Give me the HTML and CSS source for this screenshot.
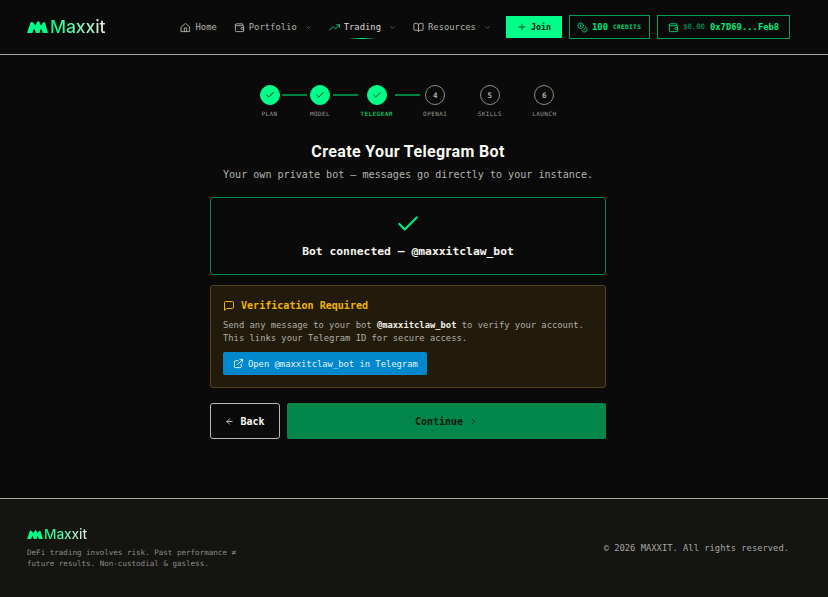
FILE: index.html
```html
<!DOCTYPE html>
<html lang="en">
<head>
<meta charset="utf-8">
<title>Maxxit</title>
<link rel="stylesheet" href="styles.css">
</head>
<body>
<header class="header">
  <a class="logo">
    <svg class="logo-mark" viewBox="0 0 21 12"><path d="M0 12 L3.2 2.4 Q4.4 -.2 6 1.4 L8 3.8 Q8.6 4.4 9 3.6 L9.8 1.6 Q11 -.8 12.4 1 L13.4 3.4 Q14 4.4 14.6 3.8 L15.6 2 Q17 -.2 18.2 2.4 L21 12 H15.6 L14.6 8.6 Q14 7.4 13.4 8.6 L12.6 12 H8.8 L7.8 8.8 Q7.2 7.4 6.6 8.6 L5.4 12 Z" fill="#00ff88"/></svg>
    <span class="logo-text">Maxxit</span>
  </a>
  <nav class="nav">
    <a class="nav-item"><svg class="ico" viewBox="0 0 24 24"><path d="M3 10.5 12 3l9 7.5V21H3Z"/><path d="M9.5 21v-8h5v8"/></svg>Home</a>
    <a class="nav-item"><svg class="ico" viewBox="0 0 24 24"><path d="M19 7V4H5a2 2 0 0 0 0 4h15a1 1 0 0 1 1 1v11a1 1 0 0 1-1 1H5a2 2 0 0 1-2-2V6"/><path d="M21 12h-4a2 2 0 0 0 0 4h4"/></svg>Portfolio<svg class="chev" viewBox="0 0 24 24"><path d="m6 9 6 6 6-6"/></svg></a>
    <a class="nav-item active"><svg class="ico ico-green" viewBox="0 0 24 24"><path d="m1 18 8-8 5 5 9-9"/><path d="M17 6h6v6"/></svg>Trading<svg class="chev" viewBox="0 0 24 24"><path d="m6 9 6 6 6-6"/></svg><span class="underline"></span></a>
    <a class="nav-item"><svg class="ico" viewBox="0 0 24 24"><path d="M12 7v14"/><path d="M3 18a1 1 0 0 1-1-1V4a1 1 0 0 1 1-1h5a4 4 0 0 1 4 4 4 4 0 0 1 4-4h5a1 1 0 0 1 1 1v13a1 1 0 0 1-1 1h-6a3 3 0 0 0-3 3 3 3 0 0 0-3-3Z"/></svg>Resources<svg class="chev" viewBox="0 0 24 24"><path d="m6 9 6 6 6-6"/></svg></a>
  </nav>
  <div class="actions">
    <a class="join"><svg class="ico ico-dark" viewBox="0 0 24 24"><path d="M5 12h14M12 5v14"/></svg>Join</a>
    <a class="pill credits"><svg class="ico ico-green" viewBox="0 0 24 24"><circle cx="8" cy="8" r="6"/><path d="M18.09 10.37A6 6 0 1 1 10.34 18"/><path d="M7 6h1v4"/><path d="m16.71 13.88.7.71-2.82 2.82"/></svg><b>100</b><span class="small">CREDITS</span></a>
    <a class="pill wallet"><svg class="ico ico-green" viewBox="0 0 24 24"><path d="M19 7V4H5a2 2 0 0 0 0 4h15a1 1 0 0 1 1 1v11a1 1 0 0 1-1 1H5a2 2 0 0 1-2-2V6"/><path d="M21 12h-4a2 2 0 0 0 0 4h4"/></svg><span class="bal">$0.00</span><b>0x7D69...Feb8</b></a>
  </div>
</header>

<main class="main">
  <ol class="stepper">
    <li class="step done"><span class="dot"><svg viewBox="0 0 24 24"><path d="M20 6 9 17l-5-5"/></svg></span><span class="lbl">PLAN</span></li>
    <li class="link on"></li>
    <li class="step done"><span class="dot"><svg viewBox="0 0 24 24"><path d="M20 6 9 17l-5-5"/></svg></span><span class="lbl">MODEL</span></li>
    <li class="link on"></li>
    <li class="step done current"><span class="dot"><svg viewBox="0 0 24 24"><path d="M20 6 9 17l-5-5"/></svg></span><span class="lbl">TELEGRAM</span></li>
    <li class="link on"></li>
    <li class="step"><span class="dot">4</span><span class="lbl">OPENAI</span></li>
    <li class="link"></li>
    <li class="step"><span class="dot">5</span><span class="lbl">SKILLS</span></li>
    <li class="link"></li>
    <li class="step"><span class="dot">6</span><span class="lbl">LAUNCH</span></li>
  </ol>

  <h1 class="title">Create Your Telegram Bot</h1>
  <p class="sub">Your own private bot — messages go directly to your instance.</p>

  <section class="card ok">
    <svg class="big-check" viewBox="0 0 24 24"><path d="M20 6 9 17l-5-5"/></svg>
    <p class="ok-text">Bot connected — @maxxitclaw_bot</p>
  </section>

  <section class="card warn">
    <h2 class="warn-title"><svg class="ico-warn" viewBox="0 0 24 24"><path d="M21 15a2 2 0 0 1-2 2H7l-4 4V5a2 2 0 0 1 2-2h14a2 2 0 0 1 2 2Z"/></svg>Verification Required</h2>
    <p class="warn-text">Send any message to your bot <b>@maxxitclaw_bot</b> to verify your account. This links your Telegram ID for secure access.</p>
    <a class="tg-btn"><svg class="ico ico-white" viewBox="0 0 24 24"><path d="M15 3h6v6"/><path d="M10 14 21 3"/><path d="M18 13v6a2 2 0 0 1-2 2H5a2 2 0 0 1-2-2V8a2 2 0 0 1 2-2h6"/></svg>Open @maxxitclaw_bot in Telegram</a>
  </section>

  <div class="buttons">
    <a class="back"><svg class="ico ico-white" viewBox="0 0 24 24"><path d="m12 19-7-7 7-7"/><path d="M19 12H5"/></svg>Back</a>
    <a class="continue">Continue<svg class="ico ico-dark" viewBox="0 0 24 24"><path d="m9 18 6-6-6-6"/></svg></a>
  </div>
</main>

<footer class="footer">
  <div class="foot-left">
    <a class="logo foot-logo">
      <svg class="logo-mark" viewBox="0 0 21 12"><path d="M0 12 L3.2 2.4 Q4.4 -.2 6 1.4 L8 3.8 Q8.6 4.4 9 3.6 L9.8 1.6 Q11 -.8 12.4 1 L13.4 3.4 Q14 4.4 14.6 3.8 L15.6 2 Q17 -.2 18.2 2.4 L21 12 H15.6 L14.6 8.6 Q14 7.4 13.4 8.6 L12.6 12 H8.8 L7.8 8.8 Q7.2 7.4 6.6 8.6 L5.4 12 Z" fill="#00ff88"/></svg>
      <span class="logo-text">Maxxit</span>
    </a>
    <p class="disclaimer">DeFi trading involves risk. Past performance ≠ future results. Non-custodial &amp; gasless.</p>
  </div>
  <p class="copy">© 2026 MAXXIT. All rights reserved.</p>
</footer>
</body>
</html>
```

FILE: styles.css
```css
* { box-sizing: border-box; margin: 0; padding: 0; }
html, body { height: 100%; }
body {
  background: #0a0a0a;
  color: #e8e8e0;
  font-family: "DejaVu Sans Mono", "Liberation Mono", monospace;
  overflow: hidden;
}
svg { display: block; flex: none; fill: none; stroke-linecap: round; stroke-linejoin: round; }

.header {
  height: 55px;
  border-bottom: 1px solid #a8a8a0;
  display: flex;
  align-items: center;
  padding: 0 38px 0 27px;
}
.logo { display: flex; align-items: center; gap: 2px; }
.logo-mark { width: 21px; height: 12px; }
.logo-text {
  font-family: Inter, "Liberation Sans", sans-serif;
  font-size: 17.6px;
  font-weight: 500;
  line-height: 20px;
  letter-spacing: -.1px;
  background: linear-gradient(90deg, #00ff88, #e8e8e0);
  -webkit-background-clip: text;
  background-clip: text;
  color: transparent;
}
.nav { display: flex; align-items: center; margin-left: 75px; gap: 17px; }
.nav-item {
  position: relative;
  display: flex;
  align-items: center;
  font-size: 8.85px;
  line-height: 12px;
  color: #b4b4ac;
}
.nav-item.active { color: #dcdcd4; }
.ico { width: 11px; height: 11px; stroke: #b4b4ac; stroke-width: 2; margin-right: 4px; }
.ico-green { stroke: #00d873; }
.ico-dark { stroke: #062414; }
.ico-white { stroke: #f2f2ea; }
.chev { width: 7px; height: 7px; stroke: #8a8a84; stroke-width: 2; margin-left: 8px; }
.underline {
  position: absolute;
  left: 19px;
  bottom: -6px;
  width: 28px;
  height: 1px;
  background: linear-gradient(90deg, transparent, #00ff88, transparent);
}
.actions { display: flex; align-items: center; margin-left: auto; gap: 7px; }
.join {
  height: 22px;
  width: 56px;
  background: #00ff88;
  color: #08130c;
  font-size: 8.4px;
  font-weight: 700;
  display: flex;
  align-items: center;
  justify-content: center;
}
.join .ico { width: 10px; height: 10px; }
.pill {
  height: 24px;
  border: 1px solid #04a15a;
  display: flex;
  align-items: center;
  color: #00e87a;
  font-size: 8.85px;
  line-height: 12px;
  padding: 0 7px;
}
.credits { width: 81px; }
.wallet { width: 133px; padding-left: 10px; }
.wallet .ico { margin-right: 4px; }
.pill .small { font-size: 6.2px; letter-spacing: .3px; font-weight: 700; margin-left: 5px; color: #00d873; }
.pill .bal { font-size: 7.3px; margin-right: 5px; color: #05a45c; }
.credits .ico { margin-right: 4px; }

.main { width: 816px; display: flex; flex-direction: column; align-items: center; padding-top: 30px; }
.stepper { list-style: none; display: flex; align-items: flex-start; height: 50px; }
.step { display: flex; flex-direction: column; align-items: center; min-width: 20px; }
.dot {
  width: 20px;
  height: 20px;
  border-radius: 50%;
  border: 1px solid #8c8c86;
  display: flex;
  align-items: center;
  justify-content: center;
  font-size: 7.5px;
  font-weight: 700;
  color: #b4b4ac;
}
.done .dot { background: #00ff88; border-color: #00ff88; }
.dot svg { width: 10px; height: 10px; stroke: #08130c; stroke-width: 2; }
.lbl { font-size: 6px; line-height: 8px; letter-spacing: .42px; margin-top: 5px; color: #999992; }
.current .lbl { color: #02b862; font-weight: 700; }
.link { width: 25px; height: 2px; margin: 9px 2.7px 0; }
.link.on { background: #04803f; }

.title {
  font-family: Roboto, Inter, sans-serif;
  font-size: 16px;
  font-weight: 700;
  line-height: 20px;
  letter-spacing: .36px;
  color: #fafaf4;
  margin-top: 7px;
}
.sub { font-size: 10.08px; line-height: 14px; color: #b4b4ac; margin-top: 6px; }

.card { width: 396px; border-radius: 3px; border: 1px solid #06894a; }
.ok { height: 78px; margin-top: 15px; display: flex; flex-direction: column; align-items: center; padding-top: 13px; }
.big-check { width: 26px; height: 26px; stroke: #00f080; stroke-width: 2; }
.ok-text { font-size: 11.35px; font-weight: 700; line-height: 14px; color: #f6f6ee; margin-top: 7px; }
.warn { background: #221a0b; border-color: #57431a; margin-top: 10px; height: 103px; padding: 13px 12px 0; }
.warn-title { display: flex; align-items: center; gap: 6px; font-size: 10.05px; font-weight: 700; line-height: 14px; color: #f0b400; }
.ico-warn { width: 12px; height: 12px; stroke: #f0b400; stroke-width: 2; }
.warn-text { font-size: 8.82px; line-height: 13px; color: #b0b0a8; margin-top: 6px; }
.warn-text b { color: #f0f0e8; }
.tg-btn {
  width: 204px;
  height: 23px;
  margin-top: 7px;
  background: #0088cc;
  color: #e6f4fb;
  border-radius: 2px;
  display: flex;
  align-items: center;
  padding-left: 10px;
  font-size: 8.82px;
}
.tg-btn .ico { margin-right: 4px; }
.buttons { width: 396px; display: flex; gap: 7px; margin-top: 15px; }
.back {
  width: 70px;
  height: 36px;
  border: 1px solid #b8b8b0;
  border-radius: 3px;
  color: #f6f6ee;
  font-size: 10px;
  font-weight: 700;
  display: flex;
  align-items: center;
  justify-content: center;
}
.back .ico { width: 9px; height: 9px; margin-right: 6px; }
.continue {
  flex: 1;
  height: 36px;
  background: #03864a;
  border-radius: 2px;
  color: #041a0d;
  font-size: 10px;
  font-weight: 700;
  display: flex;
  align-items: center;
  justify-content: center;
}
.continue .ico { width: 9px; height: 9px; margin: 0 0 0 6px; stroke-width: 2.4; }

.footer {
  position: absolute;
  left: 0;
  right: 0;
  top: 498px;
  height: 99px;
  background: #141410;
  border-top: 1px solid #a8a8a0;
  display: flex;
  justify-content: space-between;
  align-items: flex-start;
  padding: 27px 39px 0 27px;
}
.foot-logo .logo-mark { width: 16px; height: 9px; }
.foot-logo { gap: 1px; }
.foot-logo .logo-text { font-size: 13.7px; line-height: 16px; }
.disclaimer { width: 218px; font-size: 7.55px; line-height: 10.5px; color: #8c8c86; margin-top: 6px; }
.copy { font-size: 8.8px; line-height: 12px; color: #a8a8a0; margin-top: 16px; }
```
